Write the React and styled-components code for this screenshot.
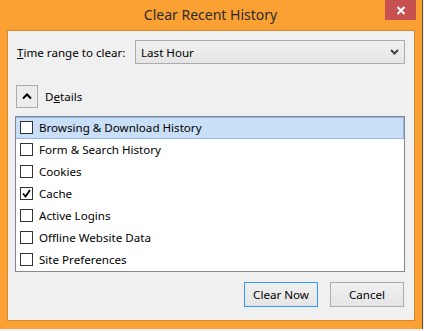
import React from 'react'
import styled, { createGlobalStyle } from 'styled-components'

const Global = createGlobalStyle`
  html, body { margin: 0; padding: 0; background: #f3f3f3; }
  body { font-family: "Noto Sans", "Open Sans", sans-serif; font-size: 11.6px; color: #000; }
`

const Frame = styled.div`
  width: 423px;
  height: 329px;
  background: #fba033;
  border-right: 1px solid #5a4a30;
  box-sizing: border-box;
  display: flex;
  flex-direction: column;
`

const TitleBar = styled.div`
  height: 30px;
  display: flex;
  align-items: center;
  justify-content: center;
  position: relative;
`

const Title = styled.div`
  font-size: 14px;
  color: #2b2b2b;
  margin-left: -1px;
  margin-top: -1px;
`

const CloseBtn = styled.div`
  position: absolute;
  left: 385px;
  top: 0;
  width: 31px;
  height: 20px;
  background: #c75050;
  display: flex;
  align-items: center;
  justify-content: center;
`

const Panel = styled.div`
  margin: 0 0 0 7px;
  width: 408px;
  height: 291px;
  box-sizing: border-box;
  border: 1px solid #d3892f;
  background: #f0f0f0;
  padding: 9px 9px 0 7px;
  display: flex;
  flex-direction: column;
`

const RangeRow = styled.div`
  display: flex;
  align-items: center;
  height: 24px;
`

const Label = styled.div`
  margin-left: 2px;
  width: 118px;
`

const Select = styled.div`
  width: 270px;
  height: 24px;
  box-sizing: border-box;
  border: 1px solid #acacac;
  background: linear-gradient(#f0f0f0, #e5e5e5);
  display: flex;
  align-items: center;
  justify-content: space-between;
  padding: 0 5px 0 5px;
`

const DetailsRow = styled.div`
  display: flex;
  align-items: center;
  margin-top: 21px;
`

const Toggle = styled.div`
  width: 22px;
  height: 23px;
  box-sizing: border-box;
  margin-left: 1px;
  border: 1px solid #acacac;
  background: #ececec;
  display: flex;
  align-items: center;
  justify-content: center;
`

const DetailsText = styled.div`
  margin-left: 7px;
  margin-top: -1px;
`

const List = styled.div`
  margin-top: 8px;
  width: 390px;
  box-sizing: border-box;
  border: 1px solid #828790;
  background: #fff;
`

const Row = styled.div`
  height: 22px;
  box-sizing: border-box;
  display: flex;
  align-items: center;
  padding: 0 0 1px 4px;
  background: ${p => (p.$selected ? '#c9dff8' : 'transparent')};
  border: 1px solid ${p => (p.$selected ? '#93b8e6' : 'transparent')};
  border-left-width: 0;
`

const Box = styled.div`
  width: 13px;
  height: 13px;
  box-sizing: border-box;
  border: 1px solid #333;
  background: #fff;
  display: flex;
  align-items: center;
  justify-content: center;
  margin-right: 6px;
`

const Buttons = styled.div`
  display: flex;
  justify-content: flex-end;
  gap: 12px;
  margin-top: 10px;
  padding-right: 1px;
`

const Button = styled.div`
  width: 74px;
  height: 25px;
  box-sizing: border-box;
  border: 1px solid ${p => (p.$primary ? '#3399ff' : '#acacac')};
  background: linear-gradient(#f0f0f0, #e5e5e5);
  display: flex;
  align-items: center;
  justify-content: center;
`

const items = [
  { label: 'Browsing & Download History', selected: true },
  { label: 'Form & Search History' },
  { label: 'Cookies' },
  { label: 'Cache', checked: true },
  { label: 'Active Logins' },
  { label: 'Offline Website Data' },
  { label: 'Site Preferences' },
]

const App = () => (
  <>
    <Global />
    <Frame>
      <TitleBar>
        <Title>Clear Recent History</Title>
        <CloseBtn>
          <svg width="10" height="9" viewBox="0 0 10 9">
            <path d="M1.5 1 L8.5 8 M8.5 1 L1.5 8" stroke="#fff" strokeWidth="2" />
          </svg>
        </CloseBtn>
      </TitleBar>
      <Panel>
        <RangeRow>
          <Label><u>T</u>ime range to clear:</Label>
          <Select>
            <span>Last Hour</span>
            <svg width="9" height="6" viewBox="0 0 9 6">
              <path d="M1 1 L4.5 4.5 L8 1" stroke="#444" strokeWidth="2" fill="none" />
            </svg>
          </Select>
        </RangeRow>
        <DetailsRow>
          <Toggle>
            <svg width="10" height="7" viewBox="0 0 10 7">
              <path d="M1 5.5 L5 1.5 L9 5.5" stroke="#000" strokeWidth="2" fill="none" />
            </svg>
          </Toggle>
          <DetailsText>D<u>e</u>tails</DetailsText>
        </DetailsRow>
        <List>
          {items.map(it => (
            <Row key={it.label} $selected={it.selected}>
              <Box>
                {it.checked && (
                  <svg width="9" height="9" viewBox="0 0 9 9">
                    <path d="M1 4.5 L3.5 7.5 L8 1" stroke="#000" strokeWidth="1.8" fill="none" />
                  </svg>
                )}
              </Box>
              {it.label}
            </Row>
          ))}
        </List>
        <Buttons>
          <Button $primary>Clear Now</Button>
          <Button>Cancel</Button>
        </Buttons>
      </Panel>
    </Frame>
  </>
)

export default App
